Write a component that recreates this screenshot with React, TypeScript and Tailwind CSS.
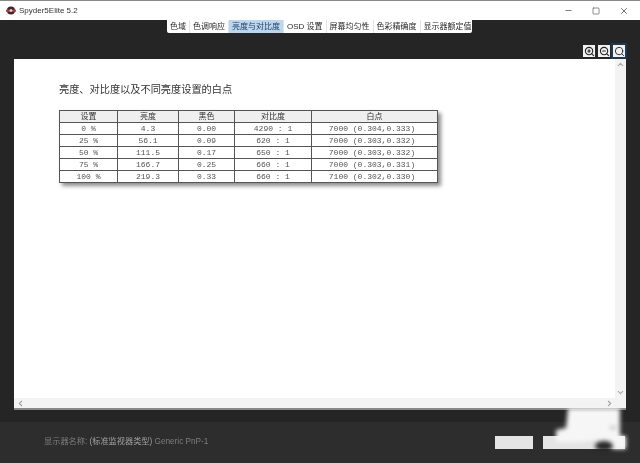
import { Minus, Square, X, ZoomIn, ZoomOut, Search, ChevronUp, ChevronDown, ChevronLeft, ChevronRight } from "lucide-react";

const tabs = ["色域", "色调响应", "亮度与对比度", "OSD 设置", "屏幕均匀性", "色彩精确度", "显示器额定值"];

const rows = [
  ["0 %", "4.3", "0.00", "4290 : 1", "7000 (0.304,0.333)"],
  ["25 %", "56.1", "0.09", "620 : 1", "7000 (0.303,0.332)"],
  ["50 %", "111.5", "0.17", "650 : 1", "7000 (0.303,0.332)"],
  ["75 %", "166.7", "0.25", "660 : 1", "7000 (0.303,0.331)"],
  ["100 %", "219.3", "0.33", "660 : 1", "7100 (0.302,0.330)"],
];

const heads = ["设置", "亮度", "黑色", "对比度", "白点"];

const colClass = "grid-cols-[58px_61px_56px_77px_125px]";

function Logo() {
  return (
    <svg width="10" height="9" viewBox="0 0 11 10">
      <circle cx="5.5" cy="5" r="4.5" fill="#3a2a2c" />
      <rect x="0" y="4" width="11" height="2.5" fill="#b8394a" />
      <circle cx="5.5" cy="5" r="1.5" fill="#e8e0e0" />
    </svg>
  );
}

// the white smudge that covers the bottom right corner of the shot
function Smudge() {
  return (
    <svg className="absolute left-[480px] top-[380px] blur-[2px]" width="160" height="83" viewBox="0 0 160 83">
      <polygon
        points="88,28 140,28 140,56 146,56 146,69 132,69 118,60 100,62 76,62 76,50 86,48"
        fill="#f6f6f6"
      />
      <ellipse cx="124" cy="66" rx="9" ry="5" fill="#262626" />
      <path d="M130 46 L133 49 L136 46" fill="none" stroke="#a8a8a8" strokeWidth="1.5" />
    </svg>
  );
}

export default function App() {
  return (
    <div className="relative w-[640px] h-[463px] overflow-hidden flex flex-col bg-[#252525] font-['Liberation_Sans','Noto_Sans_CJK_SC',sans-serif]">
      <div className="h-[20px] shrink-0 bg-white border-t border-[#8a8a8a] flex items-center pl-[6px] blur-[0.3px]">
        <Logo />
        <span className="ml-[3px] text-[8px] text-[#333]">Spyder5Elite 5.2</span>
        <div className="ml-auto flex items-center gap-[19px] pr-[11px] text-[#555]">
          <Minus size={9} />
          <Square size={8} />
          <X size={10} />
        </div>
      </div>

      <div className="h-[39px] shrink-0 relative">
        <div className="absolute left-[167px] top-0 w-[305px] h-[13px] flex items-center bg-white rounded-b-[2px] text-[8px] leading-none text-[#2a2a2a] whitespace-nowrap blur-[0.3px]">
          {tabs.map((tab, i) => (
            <span
              key={tab}
              className={
                "h-full flex items-center px-[3px] border-r border-[#e4e4e4] last:border-r-0 " +
                (i === 2 ? "bg-[#bcd6ee] text-[#1f3f66]" : "")
              }
            >
              {tab}
            </span>
          ))}
        </div>
        <div className="absolute right-[15px] top-[25px] flex gap-[3px]">
          <span className="w-[12px] h-[12px] bg-[#f2f2f2] flex items-center justify-center text-[#222]">
            <ZoomIn size={11} strokeWidth={2.4} />
          </span>
          <span className="w-[12px] h-[12px] bg-[#f2f2f2] flex items-center justify-center text-[#222]">
            <ZoomOut size={11} strokeWidth={2.4} />
          </span>
          <span className="w-[12px] h-[12px] bg-[#f2f2f2] ring-2 ring-[#1d3a52] flex items-center justify-center text-[#222]">
            <Search size={11} strokeWidth={2} />
          </span>
        </div>
      </div>

      <div className="mx-[14px] h-[351px] shrink-0 bg-white border-b-2 border-[#888] flex flex-col">
        <div className="flex-1 flex min-h-0">
          <div className="flex-1 pl-[45px] pt-[24px] blur-[0.35px]">
            <h1 className="text-[10.2px] leading-[14px] text-[#333] font-normal">亮度、对比度以及不同亮度设置的白点</h1>
            <div className="mt-[13px] w-[379px] border border-[#555] shadow-[3px_3px_4px_rgba(0,0,0,0.45)] text-[8px] leading-[11px] text-[#555]">
              <div className={"grid bg-[#efefef] " + colClass}>
                {heads.map((h) => (
                  <div key={h} className="h-[11px] text-center border-r border-[#555] last:border-r-0 text-[#333]">
                    {h}
                  </div>
                ))}
              </div>
              {rows.map((row) => (
                <div key={row[0]} className={"grid border-t border-[#555] " + colClass}>
                  {row.map((cell, i) => (
                    <div
                      key={i}
                      className={
                        "h-[11px] text-center border-r border-[#555] last:border-r-0 font-['Liberation_Mono',monospace] whitespace-pre " +
                        (i === 4 ? "pr-[5px]" : "")
                      }
                    >
                      {cell}
                    </div>
                  ))}
                </div>
              ))}
            </div>
          </div>
          <div className="w-[11px] bg-[#f3f3f3] flex flex-col items-center justify-between py-[1px] text-[#a8a8a8]">
            <ChevronUp size={9} strokeWidth={3} />
            <ChevronDown size={9} strokeWidth={3} />
          </div>
        </div>
        <div className="h-[10px] shrink-0 bg-[#f3f3f3] flex items-center justify-between pl-[2px] text-[#a0a0a0]">
          <ChevronLeft size={9} strokeWidth={3} />
          <ChevronRight size={9} strokeWidth={3} className="mr-[12px]" />
        </div>
      </div>

      <div className="flex-1 mt-[12px] bg-[#2d2d2d] flex pl-[44px] pr-[15px] pt-[14px]">
        <span className="text-[8.2px] leading-[11px] text-[#7f7f7f] blur-[0.3px]">
          显示器名称: <span className="text-[#a0a0a0]">(标准监视器类型)</span> Generic PnP-1
        </span>
        <div className="ml-auto flex gap-[10px] h-[13px]">
          <div className="w-[38px] bg-[#e4e4e4]" />
          <div className="w-[82px] bg-[#e4e4e4]" />
        </div>
      </div>

      <Smudge />
    </div>
  );
}
